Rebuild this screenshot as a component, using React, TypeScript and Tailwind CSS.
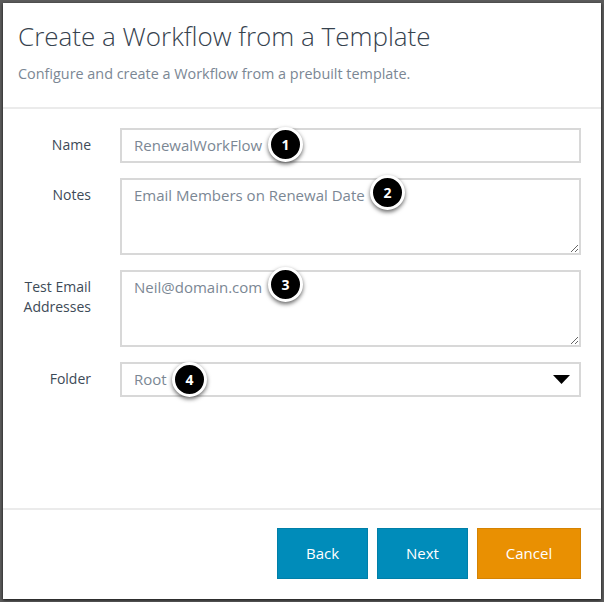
const font = { fontFamily: '"Open Sans", sans-serif' };

function Badge({ n, className }: { n: number; className: string }) {
  return (
    <div
      className={`absolute flex h-[35px] w-[35px] items-center justify-center rounded-full border-[3px] border-white bg-black text-[14px] font-bold text-white shadow-[0_2px_4px_rgba(0,0,0,0.6)] ${className}`}
    >
      {n}
    </div>
  );
}

function Label({ children }: { children: React.ReactNode }) {
  return (
    <div className="w-[88px] shrink-0 pt-[7px] text-right text-[14px] leading-[20px] text-[#3d4a57]">
      {children}
    </div>
  );
}

function Area({ value }: { value: string }) {
  return (
    <textarea
      readOnly
      defaultValue={value}
      className="block h-[77px] w-[461px] border-2 border-[#d8d8d8] bg-white px-[12px] py-[5px] text-[15px] leading-[20px] text-[#7b8794] outline-none"
    />
  );
}

function Btn({ children, className }: { children: React.ReactNode; className: string }) {
  return (
    <button className={`h-[51px] border text-[15px] text-white ${className}`}>{children}</button>
  );
}

export default function App() {
  return (
    <div className="h-[602px] w-[604px] bg-[#5c5c5c] pt-[3px] pl-[3px]" style={font}>
      <div className="relative flex h-[596px] w-[598px] flex-col bg-white shadow-[0_1px_3px_rgba(0,0,0,0.8)]">
        <div className="h-[106px] border-b-2 border-[#ebebeb] pl-[15px] pt-[15px]">
          <div className="text-[26px] font-light leading-[36px] text-[#36424e]">
            Create a Workflow from a Template
          </div>
          <div className="mt-[10px] text-[14.4px] leading-[20px] text-[#7b8794]">
            Configure and create a Workflow from a prebuilt template.
          </div>
        </div>

        <div className="flex flex-1 flex-col gap-[15px] pt-[19px]">
          <div className="flex gap-[29px]">
            <Label>Name</Label>
            <div className="flex h-[35px] w-[461px] items-center border-2 border-[#d8d8d8] px-[12px] text-[15px] text-[#7b8794]">
              RenewalWorkFlow
            </div>
          </div>
          <div className="flex gap-[29px]">
            <Label>Notes</Label>
            <Area value="Email Members on Renewal Date" />
          </div>
          <div className="flex gap-[29px]">
            <Label>
              Test Email
              <br />
              Addresses
            </Label>
            <Area value="Neil@domain.com" />
          </div>
          <div className="flex gap-[29px]">
            <Label>Folder</Label>
            <div className="flex h-[35px] w-[461px] items-center justify-between border-2 border-[#d8d8d8] pl-[12px] pr-[9px] text-[15px] text-[#7b8794]">
              Root
              <svg width="17" height="9" viewBox="0 0 17 9">
                <polygon points="0,0 17,0 8.5,9" fill="#000" />
              </svg>
            </div>
          </div>
        </div>

        <div className="flex h-[91px] justify-end gap-[9px] border-t-2 border-[#ebebeb] pr-[20px] pt-[18px]">
          <Btn className="w-[91px] border-[#007fa8] bg-[#008cba]">Back</Btn>
          <Btn className="w-[91px] border-[#007fa8] bg-[#008cba]">Next</Btn>
          <Btn className="w-[104px] border-[#d58303] bg-[#e99002]">Cancel</Btn>
        </div>

        <Badge n={1} className="left-[265px] top-[124px]" />
        <Badge n={2} className="left-[367px] top-[172px]" />
        <Badge n={3} className="left-[265px] top-[264px]" />
        <Badge n={4} className="left-[169px] top-[359px]" />
      </div>
    </div>
  );
}
